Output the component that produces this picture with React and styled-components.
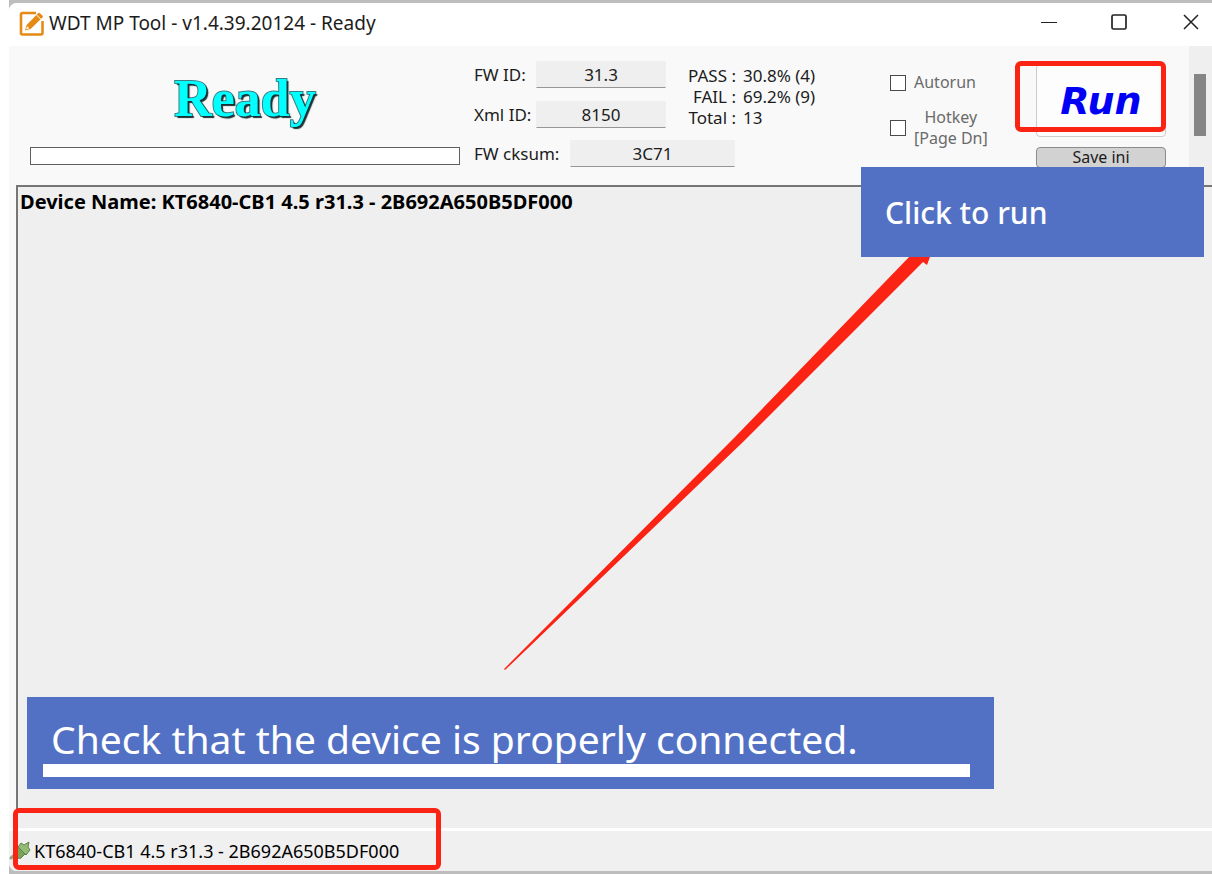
import styled, { createGlobalStyle } from "styled-components"

const GlobalStyle = createGlobalStyle`
* {
  box-sizing: border-box;
}
body {
  margin: 0;
  background: #ffffff;
  color: #1c1c1c;
  font-family: "Noto Sans", "Open Sans", sans-serif;
}
`

const stats = [
  { name: "PASS", value: "30.8% (4)" },
  { name: "FAIL", value: "69.2% (9)" },
  { name: "Total", value: "13" },
]

const AppIcon = () => (
  <svg width="26" height="26" viewBox="0 0 26 26" aria-hidden="true">
    <path d="M17 2H3.500a1.500 1.500 0 0 0-1.500 1.500V22a1.500 1.500 0 0 0 1.500 1.500H22a1.500 1.500 0 0 0 1.500-1.500V10" fill="none" stroke="#e58a14" strokeWidth="2.600" />
    <path d="M6 19.500l1.600-5.500L19 2.200a1.300 1.300 0 0 1 1.900 0l2.600 2.400a1.300 1.300 0 0 1 0 1.900L11.600 17.900z" fill="#e58a14" />
    <path d="M17.300 3.700l4.700 4.600" stroke="#ffffff" strokeWidth="1" />
    <path d="M7 18.500l1.200-3.300 2.100 2.100z" fill="#ffffff" />
  </svg>
)

const PlugIcon = () => (
  <svg width="22" height="22" viewBox="0 0 22 22" aria-hidden="true">
    <path d="M2 18l5-4" stroke="#8fa67c" strokeWidth="3" strokeLinecap="round" />
    <path d="M5 11l4-4 7 7-4 4c-3 2-9-3-7-7z" fill="#7aa45a" stroke="#5d8046" />
    <path d="M9 7l3-4 3 2 5-3-1 5 2 3-4 5z" fill="#94bb76" stroke="#5d8046" />
  </svg>
)

const App = () => {
  return (
    <>
      <GlobalStyle />
      <Page>
        <Window>
          <TitleBar>
            <AppIcon />
            <Title>WDT MP Tool - v1.4.39.20124 - Ready</Title>
            <WindowButton aria-label="Minimize">
              <svg width="16" height="16" viewBox="0 0 16 16"><path d="M0 8.500h16" stroke="#222" strokeWidth="1.200" /></svg>
            </WindowButton>
            <WindowButton aria-label="Maximize">
              <svg width="16" height="16" viewBox="0 0 16 16"><rect x="1" y="1" width="14" height="14" rx="1.500" fill="none" stroke="#222" strokeWidth="1.700" /></svg>
            </WindowButton>
            <WindowButton aria-label="Close">
              <svg width="16" height="16" viewBox="0 0 16 16"><path d="M1 1l14 14M15 1L1 15" stroke="#222" strokeWidth="1.500" /></svg>
            </WindowButton>
          </TitleBar>

          <Toolbar>
            <StateColumn>
              <State>Ready</State>
              <Progress role="progressbar" aria-label="Progress" />
            </StateColumn>
            <Readings>
              <ReadingsRow>
                <Fields>
                  <Field>
                    <label htmlFor="fwid">FW ID:</label>
                    <FieldInput id="fwid" defaultValue="31.3" readOnly />
                  </Field>
                  <Field>
                    <label htmlFor="xmlid">Xml ID:</label>
                    <FieldInput id="xmlid" defaultValue="8150" readOnly />
                  </Field>
                </Fields>
                <Stats>
                  {stats.map((stat) => (
                    <div key={stat.name}>
                      <dt>{stat.name} :</dt>
                      <dd>{stat.value}</dd>
                    </div>
                  ))}
                </Stats>
              </ReadingsRow>
              <Field $wide>
                <label htmlFor="cksum">FW cksum:</label>
                <FieldInput id="cksum" defaultValue="3C71" readOnly />
              </Field>
            </Readings>
            <Options>
              <Option>
                <input type="checkbox" />
                <span>Autorun</span>
              </Option>
              <Option>
                <input type="checkbox" />
                <span>Hotkey<br />[Page Dn]</span>
              </Option>
            </Options>
            <Actions>
              <RunButton>Run</RunButton>
              <SaveButton>Save ini</SaveButton>
              <RunMark />
            </Actions>
            <ScrollTrack>
              <ScrollThumb />
            </ScrollTrack>
          </Toolbar>

          <Output>
            <DeviceName>Device Name: KT6840-CB1 4.5 r31.3 - 2B692A650B5DF000</DeviceName>
          </Output>

          <StatusBar>
            <PlugIcon />
            <span>KT6840-CB1 4.5 r31.3 - 2B692A650B5DF000</span>
            <StatusMark />
          </StatusBar>
        </Window>

        <Arrow viewBox="0 0 430 420" aria-hidden="true">
          <path d="M0 419L231 187 407 5 398 2 430-4 423 15 419 12 239 192 1 420z" fill="#fb2314" />
        </Arrow>
        <RunNote>Click to run</RunNote>
        <CheckNote>
          <p>Check that the device is properly connected.</p>
          <Underline />
        </CheckNote>
      </Page>
    </>
  )
}

export default App

const Page = styled.div`
  position: relative;
  min-height: 100vh;
  display: flex;
  padding: 3px 0;
  overflow: hidden;
  background: #bdbdbd;
  border-left: 9px solid #ffffff;
`
const Window = styled.main`
  flex: 1;
  display: flex;
  flex-direction: column;
  overflow: hidden;
  background: #f9f9f9;
  border-radius: 8px 0 0 8px;
`
const TitleBar = styled.header`
  height: 43px;
  display: flex;
  align-items: center;
  gap: 4px;
  padding-left: 10px;
  background: #ffffff;
  svg {
    margin-bottom: 2px;
  }
`
const Title = styled.h1`
  flex: 1;
  margin: 0;
  padding-bottom: 3px;
  font-size: 19px;
  font-weight: 400;
`
const WindowButton = styled.button`
  width: 66px;
  height: 40px;
  padding: 0;
  border: none;
  background: transparent;
  &:last-child {
    width: 56px;
    padding-left: 14px;
  }
`
const Toolbar = styled.section`
  height: 139px;
  display: flex;
  padding-left: 21px;
  font-size: 16px;
  line-height: 21px;
`
const StateColumn = styled.div`
  flex: 1;
  display: flex;
  flex-direction: column;
  justify-content: space-between;
  padding: 24px 0 20px;
`
const State = styled.strong`
  text-align: center;
  font-family: "Liberation Serif", serif;
  font-size: 52px;
  line-height: 58px;
  color: #00ffff;
  -webkit-text-stroke: 2px #3b7f86;
  paint-order: stroke fill;
  text-shadow: 2px 2px 1px #1a2f33;
`
const Progress = styled.div`
  height: 18px;
  background: #ffffff;
  border: 1px solid #5f5f5f;
`
const Readings = styled.div`
  width: 416px;
  margin-left: 14px;
  padding-top: 15px;
  display: flex;
  flex-direction: column;
  gap: 12px;
  font-size: 17px;
`
const ReadingsRow = styled.div`
  display: flex;
  gap: 20px;
`
const Fields = styled.div`
  display: flex;
  flex-direction: column;
  gap: 13px;
`
const Field = styled.div`
  display: flex;
  align-items: center;
  label {
    width: ${({ $wide }) => ($wide ? "96px" : "62px")};
    white-space: nowrap;
  }
  input {
    width: ${({ $wide }) => ($wide ? "165px" : "130px")};
  }
`
const FieldInput = styled.input`
  height: 27px;
  padding: 0;
  text-align: center;
  font: inherit;
  color: inherit;
  background: #efefef;
  border: 1px solid #f0f0f0;
  border-bottom-color: #969696;
`
const Stats = styled.dl`
  margin: 0;
  padding-top: 4px;
  div {
    display: flex;
    gap: 7px;
  }
  dt {
    width: 50px;
    text-align: right;
    white-space: nowrap;
  }
  dd {
    margin: 0;
  }
`
const Options = styled.div`
  width: 146px;
  display: flex;
  flex-direction: column;
  gap: 14px;
  padding-top: 26px;
  color: #6a6a6a;
`
const Option = styled.label`
  display: flex;
  align-items: center;
  gap: 8px;
  text-align: center;
  input {
    appearance: none;
    width: 16px;
    height: 16px;
    margin: 0;
    background: #ffffff;
    border: 1px solid #4a4a4a;
  }
`
const Actions = styled.div`
  position: relative;
  width: 130px;
  margin-right: 23px;
  padding-top: 18px;
  display: flex;
  flex-direction: column;
  gap: 10px;
`
const RunButton = styled.button`
  height: 73px;
  background: #fdfdfd;
  border: 1px solid #cccccc;
  border-radius: 4px;
  color: #0000f5;
  font-family: "DejaVu Sans", sans-serif;
  font-size: 38px;
  font-style: italic;
  font-weight: 700;
`
const SaveButton = styled.button`
  height: 21px;
  padding: 0;
  background: #d2d2d2;
  border: 1px solid #8c8c8c;
  border-radius: 4px;
  color: #1c1c1c;
  font: inherit;
  line-height: 19px;
`
const RunMark = styled.span`
  position: absolute;
  top: 15px;
  left: -21px;
  right: 0;
  height: 71px;
  border: 5px solid #fb2314;
  border-radius: 6px;
  pointer-events: none;
`
const ScrollTrack = styled.div`
  width: 23px;
  padding: 28px 6px 0 5px;
  background: #efefef;
`
const ScrollThumb = styled.div`
  height: 62px;
  background: #858585;
`
const Output = styled.section`
  flex: 1;
  margin-left: 7px;
  padding: 1px 2px;
  background: #efefef;
  border-top: 2px solid #767676;
  border-left: 2px solid #767676;
`
const DeviceName = styled.p`
  margin: 0;
  color: #000000;
  font-size: 20px;
  font-weight: 700;
  line-height: 28px;
`
const StatusBar = styled.footer`
  position: relative;
  height: 43px;
  display: flex;
  align-items: center;
  gap: 3px;
  border-top: 3px solid #ffffff;
  background: #f0f0f0;
  color: #000000;
  font-size: 18px;
`
const StatusMark = styled.span`
  position: absolute;
  top: -23px;
  left: 4px;
  width: 428px;
  height: 62px;
  border: 5px solid #fb2314;
  border-radius: 6px;
  pointer-events: none;
`
const Arrow = styled.svg`
  position: absolute;
  top: 250px;
  left: 495px;
  width: 430px;
  height: 420px;
`
const RunNote = styled.aside`
  position: absolute;
  top: 167px;
  right: 8px;
  width: 343px;
  padding: 26px 24px 24px;
  background: #5271c5;
  color: #ffffff;
  font-size: 30px;
  font-weight: 500;
  line-height: 40px;
`
const CheckNote = styled.aside`
  position: absolute;
  bottom: 85px;
  left: 18px;
  width: 967px;
  padding: 16px 24px 12px 16px;
  background: #5271c5;
  color: #ffffff;
  p {
    margin: 0;
    padding-left: 8px;
    font-size: 39px;
    line-height: 51px;
  }
`
const Underline = styled.div`
  height: 13px;
  background: #ffffff;
`
